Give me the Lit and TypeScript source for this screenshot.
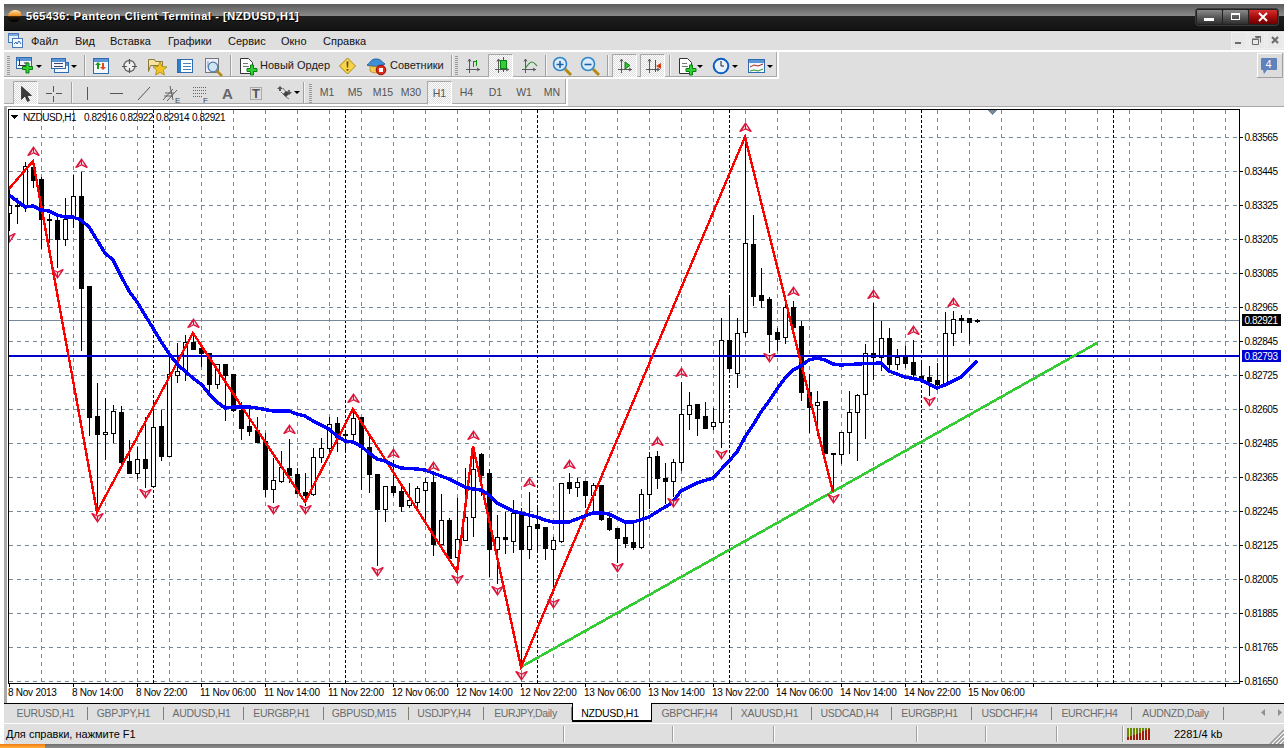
import { LitElement, html, svg, css } from "lit";
import { customElement } from "lit/decorators.js";

type C = [number, number, number, number, number, number];
// x, high, low, body top, body bottom, white?
const CANDLES: C[] = [
  [9,190,230,205,213,1],[17,198,223,205,206,0],[25,162,211,166,205,1],[33,162,187,167,180,0],[41,177,248,179,219,0],
  [49,214,242,219,220,0],[57,213,267,220,239,0],[65,198,245,219,239,1],[73,175,227,196,217,1],[81,172,350,196,288,0],
  [89,286,435,286,417,0],[97,383,512,416,434,0],[105,398,459,432,434,1],[113,405,442,411,433,1],[121,406,463,412,462,0],
  [129,440,473,461,473,0],[137,447,478,459,473,1],[145,417,487,459,468,0],[153,403,486,427,486,1],[161,410,460,426,456,0],
  [169,353,456,374,456,1],[177,343,382,371,375,1],[185,335,380,342,370,1],[193,333,349,342,349,0],[201,347,366,348,353,0],
  [209,353,393,353,384,0],[217,364,388,364,384,1],[225,364,420,364,375,0],[233,374,411,374,410,0],[241,402,439,410,428,0],
  [249,407,435,426,431,0],[257,417,442,430,442,0],[265,433,496,441,489,0],[273,458,502,480,489,1],[281,451,482,467,481,1],
  [289,439,482,468,475,0],[297,468,493,474,493,0],[305,473,505,492,495,0],[313,448,495,457,494,1],[321,438,462,448,457,1],
  [329,417,452,424,448,1],[337,417,451,423,437,0],[345,430,452,434,435,0],[353,410,442,418,434,1],[361,417,489,417,447,0],
  [369,433,492,447,474,0],[377,474,565,474,509,0],[385,486,521,486,509,1],[393,460,495,486,492,0],[401,483,511,491,506,0],
  [409,483,507,500,505,1],[417,486,507,488,502,1],[425,478,522,482,490,1],[433,473,555,482,544,0],[441,494,544,520,544,1],
  [449,518,558,520,558,0],[457,498,573,539,557,1],[465,468,540,517,540,1],[473,447,536,469,517,1],[481,453,495,454,475,0],
  [489,469,576,473,549,0],[497,515,583,537,549,1],[505,512,553,537,539,0],[513,500,552,513,541,1],[521,508,667,513,549,0],
  [529,492,558,526,549,1],[537,505,550,524,528,0],[545,527,559,527,548,0],[553,537,593,540,549,1],[561,483,542,483,541,1],
  [569,473,493,482,488,0],[577,478,496,482,487,1],[585,481,507,481,495,0],[593,483,510,485,495,1],[601,485,520,485,519,0],
  [609,512,530,518,529,0],[617,528,562,528,538,0],[625,523,547,537,543,0],[633,524,549,542,547,0],[641,489,548,494,547,1],
  [649,452,508,457,494,1],[657,451,488,456,478,0],[665,463,503,478,481,0],[673,459,496,462,481,1],[681,382,470,414,462,1],
  [689,392,429,405,414,1],[697,404,435,404,418,0],[705,402,428,416,428,0],[713,408,429,422,426,1],[721,318,447,340,422,1],
  [729,295,370,340,368,0],[737,318,387,333,373,1],[745,138,336,243,332,1],[753,215,305,244,296,0],[761,268,307,295,300,0],
  [769,297,352,299,334,0],[777,328,350,332,339,0],[785,302,343,307,337,1],[793,301,327,307,327,0],[801,321,400,326,392,0],
  [809,374,432,392,407,0],[817,391,435,402,405,1],[825,401,453,401,453,0],[833,453,491,453,454,0],[841,432,463,432,454,1],
  [849,391,453,412,432,1],[857,394,460,395,412,1],[865,344,438,353,394,1],[873,303,379,353,357,0],[881,321,370,338,357,1],
  [889,328,370,338,364,0],[897,349,369,357,364,1],[905,346,367,357,363,0],[913,340,378,362,374,0],[921,362,380,376,379,0],
  [929,366,395,377,381,0],[937,363,388,380,384,0],[945,312,383,333,383,1],[953,311,345,319,333,1],[961,315,332,318,320,0],
  [969,318,343,318,322,0],[977,319,322,320,321,0],
];

const MA = "9,195 17,201 25,207 33,206 41,210 49,211 57,215 65,217 73,217 81,220 89,227 97,240 105,253 113,260 121,276 129,291 137,302 148,320 162,343 170,355 178,365 187,373 193,378 202,385 210,395 217,402 225,408 233,407 249,407 257,408 273,411 289,411 297,414 305,416 313,421 329,429 337,436 345,441 353,442 361,446 369,453 377,459 385,461 393,465 401,468 417,469 425,470 433,473 441,476 449,479 457,483 465,487 473,489 481,490 489,495 497,503 505,507 513,511 521,513 529,515 537,517 545,520 553,522 569,522 577,519 585,516 593,513 601,513 609,514 617,518 625,522 633,522 640,520 649,517 660,510 672,503 681,491 697,483 713,478 729,461 737,452 745,437 753,425 761,412 769,401 777,389 785,378 793,370 801,366 809,360 817,358 825,360 833,364 841,365 857,364 881,363 889,371 905,377 921,380 929,384 937,388 945,385 961,377 969,369 977,361";
const ZIGZAG = "8,190 33,161 97,512 193,333 305,502 353,409 457,572 473,446 521,667 745,137 833,492";
const UP: [number, number][] = [[33,151],[81,163],[193,323],[289,429],[353,398],[393,453],[433,466],[473,435],[529,482],[569,464],[657,441],[681,372],[745,127],[793,291],[873,294],[913,330],[953,302]];
const DOWN: [number, number][] = [[9,238],[57,274],[97,518],[145,494],[273,510],[305,510],[377,572],[457,580],[497,591],[521,676],[553,604],[617,568],[673,503],[721,455],[769,358],[833,499],[929,402]];
const PRICES: [string, number][] = [["0.83565",137],["0.83445",171],["0.83325",205],["0.83205",239],["0.83085",273],["0.82965",307],["0.82845",341],["0.82725",375],["0.82605",409],["0.82485",443],["0.82365",477],["0.82245",511],["0.82125",545],["0.82005",579],["0.81885",613],["0.81765",647],["0.81650",681]];
const TIMES = ["8 Nov 2013","8 Nov 14:00","8 Nov 22:00","11 Nov 06:00","11 Nov 14:00","11 Nov 22:00","12 Nov 06:00","12 Nov 14:00","12 Nov 22:00","13 Nov 06:00","13 Nov 14:00","13 Nov 22:00","14 Nov 06:00","14 Nov 14:00","14 Nov 22:00","15 Nov 06:00"];
const TABS: [string, number][] = [["EURUSD,H1",80],["GBPJPY,H1",76],["AUDUSD,H1",80],["EURGBP,H1",80],["GBPUSD,M15",85],["USDJPY,H4",75],["EURJPY,Daily",88],["NZDUSD,H1",80],["GBPCHF,H4",80],["XAUUSD,H1",80],["USDCAD,H4",80],["EURGBP,H1",80],["USDCHF,H4",80],["EURCHF,H4",80],["AUDNZD,Daily",92]];
const STATUS = [560, 109, 101, 143, 69, 71, 66];
const MENU: [string, number][] = [["Файл",44],["Вид",35],["Вставка",58],["Графики",60],["Сервис",53],["Окно",42],["Справка",50]];

const caret = (x: number, y: number) => svg`<path d="M${x} ${y}h6l-3 3z" fill="#000"/>`;
const plus = (cx: number, cy: number, r = 5) => svg`<path d="M${cx - 1.5} ${cy - r}h3v${r - 1.5}h${r - 1.5}v3h${-(r - 1.5)}v${r - 1.5}h-3v${-(r - 1.5)}h${-(r - 1.5)}v-3h${r - 1.5}z" fill="#2fd12f" stroke="#0c7d16"/>`;
const axes = (x: number, y: number) => svg`<path d="M${x + 3.5} ${y}v14M${x} ${y + 10.5}h14M${x + 2} ${y + 2.5}l1.5-2.5 1.5 2.5M${x + 11} ${y + 9}l2.5 1.5-2.5 1.5" stroke="#5a5a5a" fill="none"/>`;
const win = (x: number, y: number, w: number, h: number) => svg`<rect x="${x + 0.5}" y="${y + 0.5}" width="${w - 1}" height="${h - 1}" fill="#f4f7fc" stroke="#2f6bb0"/><rect x="${x + 1}" y="${y + 1}" width="${w - 2}" height="3" fill="#5a95d8"/>`;
const lens = (cx: number, cy: number, minus: boolean) => svg`<path d="M${cx + 5} ${cy + 5}l6 6" stroke="#b58a12" stroke-width="3"/><circle cx="${cx}" cy="${cy}" r="6.5" fill="#d9ecfb" stroke="#2e86c9" stroke-width="1.6"/><path d="M${cx - 3.5} ${cy + 0.5}h7${minus ? "" : `M${cx} ${cy - 3}v7`}" stroke="#1d5fa8" stroke-width="1.6" fill="none"/>`;
const doc = (x: number, y: number) => svg`<path d="M${x + 0.5} ${y + 0.5}h8l4 4v11h-12z" fill="#fff" stroke="#333"/><path d="M${x + 3} ${y + 5.5}h5M${x + 3} ${y + 8.5}h6" stroke="#777"/>`;

const I = {
  grip: (x: number, top: number) => svg`<rect x="${x}" y="${top + 4}" width="3" height="20" fill="url(#dots)"/><defs><pattern id="dots" width="2" height="2" patternUnits="userSpaceOnUse"><rect width="2" height="1" fill="#9a9a9a"/></pattern></defs>`,
  sep: (x: number, top: number) => svg`<path d="M${x + 0.5} ${top + 3}v21" stroke="#a0a0a0"/><path d="M${x + 1.5} ${top + 3}v21" stroke="#f4f4f4"/>`,
  chartAdd: svg`${win(16, 57, 16, 12)}<path d="M19.5 59v7M18 65.5h10M24 63h4" stroke="#335"/>${plus(27.5, 68)}${caret(36, 65)}`,
  profiles: svg`${win(54, 62, 15, 11)}${win(51, 58, 15, 11)}<path d="M54 63.5h9M54 66.5h9" stroke="#446"/>${caret(71, 65)}`,
  market: svg`${win(93, 58, 16, 16)}<path d="M98 62l-3 3h2v4h2v-4h2z" fill="#199a19"/><path d="M103 70l3-3h-2v-4h-2v4h-2z" fill="#e24a1c"/>`,
  cross: svg`<circle cx="129.5" cy="66" r="5.5" fill="#f0f0f0" stroke="#6a6a6a" stroke-width="1.4"/><path d="M129.5 59v5M129.5 68v5M122 66.5h5M132 66.5h5" stroke="#555" stroke-width="1.2"/>`,
  folder: svg`<path d="M148.5 59.5h6l1 2h7v4h-12l-2 6z" fill="#f6e3a0" stroke="#8a7a3a"/><path d="M160 62l2 4.5 5 .4-3.7 3.2 1.1 4.9-4.4-2.6-4.4 2.6 1.1-4.9-3.7-3.2 5-.4z" fill="#f2c321" stroke="#a8860f" stroke-width=".8"/>`,
  table: svg`<rect x="177.5" y="59.5" width="15" height="13" fill="#fff" stroke="#2f6bb0"/><rect x="178" y="60" width="3" height="12" fill="#2f7fd1"/><path d="M183 63.5h8M183 66.5h8M183 69.5h8" stroke="#4d7fb8"/>`,
  pageZoom: svg`<rect x="205.5" y="58.5" width="13" height="14" fill="#eef" stroke="#777"/><path d="M208 61v6h8" stroke="#999" fill="none"/><path d="M216 70l6 6" stroke="#b58a12" stroke-width="2.5"/><circle cx="213" cy="67" r="4.8" fill="#cfe5f6" stroke="#4c7fa8" stroke-width="1.3"/>`,
  newOrder: svg`${doc(240, 58)}${plus(252, 70)}`,
  diamond: svg`<path d="M347.5 58l8 8-8 8-8-8z" fill="#f7d34a" stroke="#a8860f"/><path d="M346.5 61.5h2l-.4 6h-1.2zM346.6 69h1.8v1.8h-1.8z" fill="#6a4a00"/>`,
  hat: svg`<path d="M367 65c3-1 3-6 9-6s6 4 9 5c-6 3-12 3-18 1z" fill="#3f8fd8" stroke="#245e98"/><path d="M370 66c3 1 9 1 12 0v4c-1 3-9 4-12 1z" fill="#f3cb55" stroke="#a8860f" stroke-width=".7"/><circle cx="381" cy="70" r="4.8" fill="#e02a1a" stroke="#8a1208"/><rect x="379" y="68" width="4" height="4" fill="#fff"/>`,
  bars: svg`${axes(466, 59)}<path d="M473.5 67v-6M473.5 61.5h3M476.5 60v6" stroke="#0f8f0f" fill="none"/>`,
  candle: svg`${axes(495, 59)}<path d="M503.5 57v15" stroke="#0c7d16"/><rect x="500.5" y="60.5" width="6" height="8" fill="#2fd12f" stroke="#0c7d16"/>`,
  line: svg`${axes(522, 59)}<path d="M525 69c3-5 5-7 7-7s3 2 5 4" stroke="#3a8f3a" fill="none" stroke-width="1.2"/>`,
  zin: lens(560, 64, false),
  zout: lens(588, 64, true),
  auto: svg`${axes(618, 59)}<path d="M625 62l5 3.5-5 3.500z" fill="#35c435" stroke="#0c7d16"/>`,
  shift: svg`${axes(646, 59)}<path d="M655.500 60v12" stroke="#2f50b0"/><path d="M661 63l-5 3 5 3z" fill="#d23a10"/>`,
  add: svg`${doc(679, 58)}${plus(691, 70)}${caret(697, 65)}`,
  clock: svg`<circle cx="721" cy="66" r="7.300" fill="#e8f0fa" stroke="#0b5cc0" stroke-width="2"/><path d="M721 61v5h3" stroke="#222" fill="none"/>${caret(732, 65)}`,
  templ: svg`${win(748, 59, 17, 14)}<path d="M750 67l4-2 4 1 5-2" stroke="#a8281a" fill="none"/><path d="M750 71l4-1 4 1 5-2" stroke="#2a9a2a" fill="none"/>${caret(767, 65)}`,
  arrow: svg`<path d="M21.500 86.500v13l3.500-3.500 2.500 5.500 2-1-2.500-5h4.500z" fill="#3a3a3a" stroke="#111" stroke-width=".6"/>`,
  thin: svg`<path d="M53.500 86v6M53.500 96v6M46 93.500h6M56 93.500h6" stroke="#555"/>`,
  vert: svg`<path d="M87.500 87v13" stroke="#555"/>`,
  hori: svg`<path d="M110 93.500h13" stroke="#555"/>`,
  trend: svg`<path d="M138 100l12-13" stroke="#555"/>`,
  fibo: svg`<path d="M163 100l10-11M167 101l10-11M165 93h9M164 96h9M170 86l3 14" stroke="#555" stroke-width=".9" fill="none"/><text class="mini" x="175" y="103">E</text>`,
  fib: svg`<path d="M193 87.500h14M193 90.500h14M193 93.500h14M193 96.500h10" stroke="#666" stroke-dasharray="1 1"/><text class="mini" x="203" y="103">F</text>`,
  letterA: svg`<text class="letter" x="222" y="99">A</text>`,
  labelT: svg`<rect x="250.500" y="87.500" width="11" height="12" fill="none" stroke="#777" stroke-dasharray="1 1"/><text class="letter2" x="252" y="98">T</text>`,
  updown: svg`<path d="M280 86l3 3h-2v2h-2v-2h-2zM289 95l3-3h-2v-2h-2v2h-2z" fill="#555"/><path d="M283 88l3 4 4-1M281 92l5 5 3 2" stroke="#777" fill="none"/><path d="M283 94l3 3 3-3-3-3z" fill="#444"/>${caret(294, 91)}`,
};

type Item = { w: number; icon?: any; on?: boolean; label?: string; mk?: string };
const ROW1: Item[] = [
  { w: 8, mk: "grip" }, { w: 34, icon: I.chartAdd }, { w: 36, icon: I.profiles }, { w: 5, mk: "sep2" },
  { w: 28, icon: I.market }, { w: 28, icon: I.cross }, { w: 28, icon: I.folder }, { w: 28, icon: I.table }, { w: 28, icon: I.pageZoom },
  { w: 6, mk: "sep3" }, { w: 27, icon: I.newOrder }, { w: 75, label: "Новый Ордер" }, { w: 26, icon: I.diamond }, { w: 29, icon: I.hat },
  { w: 59, label: "Советники" }, { w: 4, mk: "sep2" }, { w: 6, mk: "grip2" }, { w: 29, icon: I.bars }, { w: 25, icon: I.candle, on: true },
  { w: 31, icon: I.line }, { w: 4, mk: "sep1" }, { w: 28, icon: I.zin }, { w: 28, icon: I.zout }, { w: 6, mk: "sep3" }, { w: 2 },
  { w: 25, icon: I.auto, on: true }, { w: 3 }, { w: 25, icon: I.shift, on: true }, { w: 1 }, { w: 6, mk: "sep3" },
  { w: 34, icon: I.add }, { w: 36, icon: I.clock }, { w: 34, icon: I.templ },
];
const ROW2: Item[] = [
  { w: 9 }, { w: 25, icon: I.arrow, on: true }, { w: 31, icon: I.thin }, { w: 4, mk: "sep2" }, { w: 22, icon: I.vert }, { w: 34, icon: I.hori },
  { w: 28, icon: I.trend }, { w: 29, icon: I.fibo }, { w: 28, icon: I.fib }, { w: 24, icon: I.letterA }, { w: 30, icon: I.labelT }, { w: 34, icon: I.updown },
  { w: 4, mk: "sep1" }, { w: 7, mk: "grip" },
  { w: 28, label: "M1" }, { w: 28, label: "M5" }, { w: 28, label: "M15" }, { w: 28, label: "M30" }, { w: 2 }, { w: 25, label: "H1", on: true },
  { w: 29, label: "H4" }, { w: 29, label: "D1" }, { w: 28, label: "W1" }, { w: 28, label: "MN" },
];

@customElement("app-root")
export class AppRoot extends LitElement {
  static styles = css`
    :host { display: block; width: 1288px; height: 748px; background: #fff; overflow: hidden; position: relative;
      font-family: "Liberation Sans", Arial, sans-serif; font-size: 11px; color: #000; }
    .frame { display: flex; flex-direction: column; height: 748px; padding: 4px 4px 0 4px; box-sizing: border-box; width: 1288px; }
    svg { display: block; }

    .title { flex: none; height: 27px; display: flex; align-items: flex-start; color: #fff; font-weight: 700; font-size: 11px;
      background: linear-gradient(#5c5c5c 0, #8a8a8a 12px, #1f1f1f 12px, #131313 26px, #000 26px); }
    .title-ic { margin: 5px 0 0 3px; flex: none; }
    .title-t { margin: 5px 0 0 4px; letter-spacing: 0.55px; line-height: 14px; white-space: nowrap; text-shadow: 1px 1px 0 #000; }
    .wbtn { margin: 4px 5px 0 auto; flex: none; }

    .menu { flex: none; height: 19px; display: flex; align-items: center; background: #dfdfdf; }
    .menu-ic { margin: 0 8px 0 4px; flex: none; }
    .menu-i { white-space: nowrap; color: #111; flex: none; }
    .kids { margin-left: auto; flex: none; }

    .hr { flex: none; height: 2px; background: #fff; }
    .bars { flex: none; height: 54px; background: #dfdfdf; display: flex; justify-content: space-between; }
    .rows { display: flex; flex-direction: column; }
    .tb { display: flex; height: 27px; box-sizing: border-box; border-right: 2px solid; border-bottom: 2px solid; border-color: #fff; box-shadow: inset -1px -1px 0 #a8a8a8; }
    .tb1 { width: 775px; }
    .tb2 { width: 564px; }
    .it { flex: none; height: 26px; position: relative; }
    .lbl { flex: none; height: 26px; line-height: 26px; white-space: nowrap; color: #1a1a1a; }
    .tf { text-align: center; color: #555; font-size: 10.500px; }
    .tf-on { height: 24px; line-height: 22px; margin-top: 2px; box-sizing: border-box; border: 1px solid; border-color: #a8a8a8 #fff #fff #a8a8a8;
      background: conic-gradient(#fff 25%, #dcdcdc 0 50%, #fff 0 75%, #dcdcdc 0) 0 0 / 2px 2px; }
    .bubble { margin: 1px 1px 0 0; flex: none; }

    .glow { flex: none; height: 1px; background: #a8a8a8; }
    .mid { flex: none; height: 596px; display: flex; background: #fff; }
    .gutter { flex: none; width: 3px; background: #a8a8a8; margin-right: 1px; }
    .mini { font: 8px "Liberation Sans", Arial, sans-serif; fill: #444; }
    .letter { font: 700 15px "Liberation Sans", Arial, sans-serif; fill: #666; }
    .letter2 { font: 700 13px "Liberation Sans", Arial, sans-serif; fill: #555; }
    .ax { font: 10px "Liberation Sans", Arial, sans-serif; fill: #000; letter-spacing: -0.45px; }
    .tm { font: 10px "Liberation Sans", Arial, sans-serif; fill: #000; letter-spacing: -0.25px; }
    .axw { font: 10px "Liberation Sans", Arial, sans-serif; fill: #fff; letter-spacing: -0.45px; }

    .tabs { flex: none; height: 20px; display: flex; background: #dfdfdf; position: relative; box-shadow: inset 0 1px 0 #000; }
    .tab-gutter { flex: none; width: 4px; }
    .tab { flex: none; height: 13px; margin-top: 4px; line-height: 13px; box-sizing: border-box; border-right: 1px solid #808070; padding-right: 4px; text-align: center; color: #6c6c6c; white-space: nowrap; font-size: 10.500px; letter-spacing: -0.3px; }
    .tab.act { height: 19px; margin-top: 0; line-height: 20px; border: 1px solid #000; border-top: 0; border-bottom-width: 2px; background: #fff; color: #000; }
    .nav { margin: 3px 0 0 auto; flex: none; }
    .gap { flex: none; height: 1px; background: #fff; }

    .status { flex: none; display: flex; align-items: center; background: #dfdfdf; height: 20px; }
    .cell { flex: none; height: 16px; line-height: 16px; box-sizing: border-box; border-right: 1px solid #a0a0a0; box-shadow: 1px 0 0 #fff; }
    .cell-t { padding-left: 2px; white-space: nowrap; }
    .kb { margin-left: 23px; white-space: nowrap; flex: none; width: 60px; }
    .conn { margin-left: 4px; flex: none; }
    .grip { margin-left: auto; flex: none; align-self: flex-end; }
    .foot { position: absolute; left: 0; right: 4px; bottom: 0; height: 4px; background: linear-gradient(#6e6e6e, #8e8e8e); }
    .foot-or { display: block; width: 45px; height: 4px; background: linear-gradient(#f07a10, #ffb040); }
  `;

  private item(it: Item, x: number, top: number) {
    if (it.label) {
      const tf = top > 60;
      return html`<span class="lbl ${tf ? "tf" : ""} ${it.on ? "tf-on" : ""}" style="width:${it.w}px">${it.label}</span>`;
    }
    const mk = it.mk;
    const body = mk === "grip" ? I.grip(x + 3, top) : mk === "grip2" ? I.grip(x + 2, top)
      : mk === "sep1" ? I.sep(x + 1, top) : mk === "sep2" ? I.sep(x + 2, top) : mk === "sep3" ? I.sep(x + 3, top)
      : it.on ? svg`<defs><pattern id="chk${x}" width="2" height="2" patternUnits="userSpaceOnUse"><rect width="2" height="2" fill="#fff"/><rect width="1" height="1" fill="#dcdcdc"/><rect x="1" y="1" width="1" height="1" fill="#dcdcdc"/></pattern></defs>
        <rect x="${x}" y="${top + 2}" width="${it.w}" height="24" fill="url(#chk${x})"/>
        <path d="M${x + .5} ${top + 25.5}V${top + 2.5}H${x + it.w - .5}" stroke="#a8a8a8" fill="none"/>
        <path d="M${x + .5} ${top + 25.5}H${x + it.w - .5}V${top + 2.5}" stroke="#fff" fill="none"/>${it.icon}`
      : it.icon;
    return html`<svg class="it" width="${it.w}" height="26" viewBox="${x} ${top} ${it.w} 26">${body}</svg>`;
  }

  private row(items: Item[], top: number) {
    let x = 4;
    return items.map((it) => { const r = this.item(it, x, top); x += it.w; return r; });
  }

  private chart() {
    const hGrid = PRICES.map(([, y]) => y);
    const vGrid: number[] = [];
    for (let x = 41; x <= 1225; x += 32) vGrid.push(x);
    const seps = [153, 345, 537, 729, 921, 1113];
    const ticks: number[] = [];
    for (let x = 9; x <= 1225; x += 32) ticks.push(x);
    return svg`
      <svg width="1276" height="596" viewBox="8 107 1276 596" shape-rendering="crispEdges">
        <rect x="8" y="107" width="1276" height="596" fill="#fff"/>
        <g stroke="#778899" stroke-dasharray="4 4" fill="none">
          ${hGrid.map((y) => svg`<path d="M9 ${y + .5}H1239"/>`)}
          ${vGrid.filter((x) => !seps.includes(x)).map((x) => svg`<path d="M${x + .5} 110V683"/>`)}
        </g>
        <g stroke="#000" stroke-dasharray="3 2" fill="none">${seps.map((x) => svg`<path d="M${x + .5} 110V683"/>`)}</g>
        <path d="M9 320.500H1239" stroke="#778899"/>
        <path d="M987 110h10l-5 5z" fill="#778899" stroke="none"/>
        ${CANDLES.map(([x, hi, lo, top, bot, w]) => svg`
          <rect x="${x}" y="${hi}" width="1" height="${lo - hi + 1}" fill="#000"/>
          ${w ? svg`<rect x="${x - 1.5}" y="${top + .5}" width="4" height="${Math.max(bot - top, 1)}" fill="#fff" stroke="#000"/>`
              : svg`<rect x="${x - 2}" y="${top}" width="5" height="${Math.max(bot - top + 1, 2)}" fill="#000"/>`}`)}
        <rect x="9" y="355" width="1230" height="2" fill="#0000cd"/>
        <path d="M521 667L1097 343" stroke="#32cd32" stroke-width="2.600" fill="none"/>
        <polyline points="${ZIGZAG}" fill="none" stroke="#ff0000" stroke-width="2.400"/>
        <polyline points="${MA}" fill="none" stroke="#0000ff" stroke-width="3.400"/>
        <g shape-rendering="auto">
          ${UP.map(([x, y]) => svg`<g transform="translate(${x - 6} ${y - 5})"><path d="M6.500 0L13 9.500L11.500 10L6.500 7.500L1.500 10L0 9.500Z" fill="#dc143c"/><path d="M7 2.800L10 7.800L7 6.300ZM6 3.800L3.300 8L6 6.600Z" fill="#fff" fill-opacity=".85"/></g>`)}
          ${DOWN.map(([x, y]) => svg`<g transform="translate(${x - 6} ${y - 5})"><path d="M6.500 10L13 .500L11.500 0L6.500 2.500L1.500 0L0 .500Z" fill="#dc143c"/><path d="M7 7.200L10 2.200L7 3.700ZM6 6.200L3.300 2L6 3.400Z" fill="#fff" fill-opacity=".85"/></g>`)}
        </g>
        <path d="M8 109.500H1239.500V683.500H8.500V109" stroke="#000" fill="none"/>
        <g stroke="#000">
          ${hGrid.map((y) => svg`<path d="M1239 ${y + .5}h4"/>`)}
          ${ticks.map((x, i) => i % 2 === 0 ? svg`<path d="M${x + .5} 683v4"/>` : "")}
        </g>
        <path d="M11 115h7l-3.500 4z" fill="#000"/>
        <g shape-rendering="auto">
          <text class="ax" y="121"><tspan x="23">NZDUSD,H1</tspan><tspan x="84">0.82916</tspan><tspan x="120">0.82922</tspan><tspan x="156">0.82914</tspan><tspan x="192">0.82921</tspan></text>
          ${PRICES.map(([p, y]) => svg`<text class="ax" x="1244.500" y="${y + 4}">${p}</text>`)}
          ${TIMES.map((t, i) => svg`<text class="tm" x="${8 + i * 64}" y="696">${t}</text>`)}
        </g>
        <rect x="1242" y="314" width="39" height="12" fill="#000"/>
        <rect x="1242" y="350" width="39" height="12" fill="#0000cd"/>
        <g shape-rendering="auto">
          <text class="axw" x="1244.500" y="324">0.82921</text>
          <text class="axw" x="1244.500" y="360">0.82793</text>
        </g>
      </svg>`;
  }

  private conn() {
    const bars = [];
    for (let i = 0; i < 8; i++) {
      const red = 3 + Math.round(i * 1.1);
      bars.push(svg`<rect x="${i * 3}" y="0" width="2" height="${12 - red}" fill="#6b8a00"/><rect x="${i * 3}" y="${12 - red}" width="2" height="${red}" fill="#a01e08"/>`);
    }
    return html`<svg class="conn" width="24" height="12" viewBox="0 0 24 12">${bars}</svg>`;
  }

  render() {
    return html`
      <div class="frame">
        <div class="title">
          <svg class="title-ic" width="15" height="15" viewBox="0 0 15 15">
            <defs><linearGradient id="or" x1="0" y1="0" x2="0" y2="1"><stop offset="0" stop-color="#ffe0a0"/><stop offset=".5" stop-color="#f08a1c"/><stop offset=".55" stop-color="#2a1a08"/><stop offset="1" stop-color="#000"/></linearGradient></defs>
            <path d="M1 8c0-5 4-7 7-7s6 1 6 4-1 8-6 8-7-1-7-5z" fill="url(#or)"/>
          </svg>
          <span class="title-t">565436: Panteon Client Terminal - [NZDUSD,H1]</span>
          <svg class="wbtn" width="84" height="18" viewBox="0 0 84 18">
            <defs>
              <linearGradient id="gb" x1="0" y1="0" x2="0" y2="1"><stop offset="0" stop-color="#8a8a8a"/><stop offset=".5" stop-color="#5a5a5a"/><stop offset="1" stop-color="#2e2e2e"/></linearGradient>
              <linearGradient id="rb" x1="0" y1="0" x2="0" y2="1"><stop offset="0" stop-color="#d83030"/><stop offset=".5" stop-color="#a80c0c"/><stop offset="1" stop-color="#6c0000"/></linearGradient>
            </defs>
            <rect x=".5" y=".5" width="83" height="17" rx="3" fill="#222" stroke="#3c3c3c"/>
            <rect x="2" y="2" width="25" height="14" rx="1" fill="url(#gb)"/>
            <rect x="28" y="2" width="25" height="14" rx="1" fill="url(#gb)"/>
            <rect x="54" y="2" width="28" height="14" rx="1" fill="url(#rb)"/>
            <rect x="9" y="10" width="10" height="3" fill="#fff"/>
            <rect x="36.500" y="5.500" width="8" height="6" fill="none" stroke="#fff"/><rect x="36" y="5" width="9" height="2" fill="#fff"/>
            <path d="M64 5l8 8M72 5l-8 8" stroke="#fff" stroke-width="2"/>
          </svg>
        </div>
        <div class="menu">
          <svg class="menu-ic" width="15" height="15" viewBox="0 0 15 15">
            <rect x=".5" y=".5" width="10" height="9" fill="#e6eefa" stroke="#4a7ab8"/><rect x="4.500" y="5.500" width="10" height="9" fill="#f4f8ff" stroke="#4a7ab8"/>
            <path d="M6 11l2-2 1 2 2-3 2 3" stroke="#2f6bb0" fill="none"/><rect x="1" y="1" width="9" height="2" fill="#7ba6de"/>
          </svg>
          ${MENU.map(([t, w]) => html`<span class="menu-i" style="width:${w}px">${t}</span>`)}
          <svg class="kids" width="53" height="18" viewBox="1231 32 53 18">
            <rect x="1231" y="32" width="16" height="17" fill="#e8e8e8" stroke="#f6f6f6"/><rect x="1249" y="32" width="16" height="17" fill="#e8e8e8" stroke="#f6f6f6"/><rect x="1267" y="32" width="16" height="17" fill="#e8e8e8" stroke="#f6f6f6"/>
            <rect x="1235" y="42" width="6" height="2" fill="#6a6a6a"/>
            <path d="M1255.500 37.500h5v5M1252.500 39.500h6v5h-6z" fill="none" stroke="#6a6a6a"/><path d="M1255 36.500h6M1252 39h7" stroke="#6a6a6a"/>
            <path d="M1272 37l6 6M1278 37l-6 6" stroke="#6a6a6a" stroke-width="2"/>
          </svg>
        </div>
        <div class="hr"></div>
        <div class="bars">
          <div class="rows">
            <div class="tb tb1">${this.row(ROW1, 52)}</div>
            <div class="tb tb2">${this.row(ROW2, 79)}</div>
          </div>
          <svg class="bubble" width="26" height="26" viewBox="1257 53 26 26">
            <rect x="1257" y="53" width="25" height="25" fill="#dcdcdc"/>
            <path d="M1257.500 78V53.500H1282" stroke="#fff" fill="none"/><path d="M1257 77.500H1282.500V53" stroke="#a0a0a0" fill="none"/>
            <rect x="1261" y="58" width="16" height="12" rx="1" fill="#5f82bb"/><path d="M1263 70h4l-3 4z" fill="#5f82bb"/>
            <text x="1265.500" y="68" font-family="Liberation Sans, Arial, sans-serif" font-size="11" fill="#fff">4</text>
          </svg>
        </div>
        <div class="glow"></div>
        <div class="mid"><div class="gutter"></div>${this.chart()}</div>
        <div class="tabs">
          <div class="tab-gutter"></div>
          ${TABS.map(([t, w], i) => html`<div class="tab ${i === 7 ? "act" : ""}" style="width:${w}px">${t}</div>`)}
          <svg class="nav" width="28" height="13" viewBox="0 0 28 13"><path d="M5 6.500l4-3.500v7zM22 3l4 3.500-4 3.500z" fill="#909090"/></svg>
        </div>
        <div class="gap"></div>
        <div class="status">
          ${STATUS.map((w, i) => html`<div class="cell ${i === 0 ? "cell-t" : ""}" style="width:${w}px">${i === 0 ? "Для справки, нажмите F1" : ""}</div>`)}
          ${this.conn()}
          <span class="kb">2281/4 kb</span>
          <svg class="grip" width="16" height="17" viewBox="0 0 16 17"><path d="M2 17L16 3M6 17L16 7M10 17L16 11M14 17L16 15" stroke="#999" stroke-width="1.500"/><path d="M4 17L16 5M8 17L16 9M12 17L16 13" stroke="#fff"/></svg>
        </div>
      </div>
      <div class="foot"><span class="foot-or"></span></div>
    `;
  }
}
